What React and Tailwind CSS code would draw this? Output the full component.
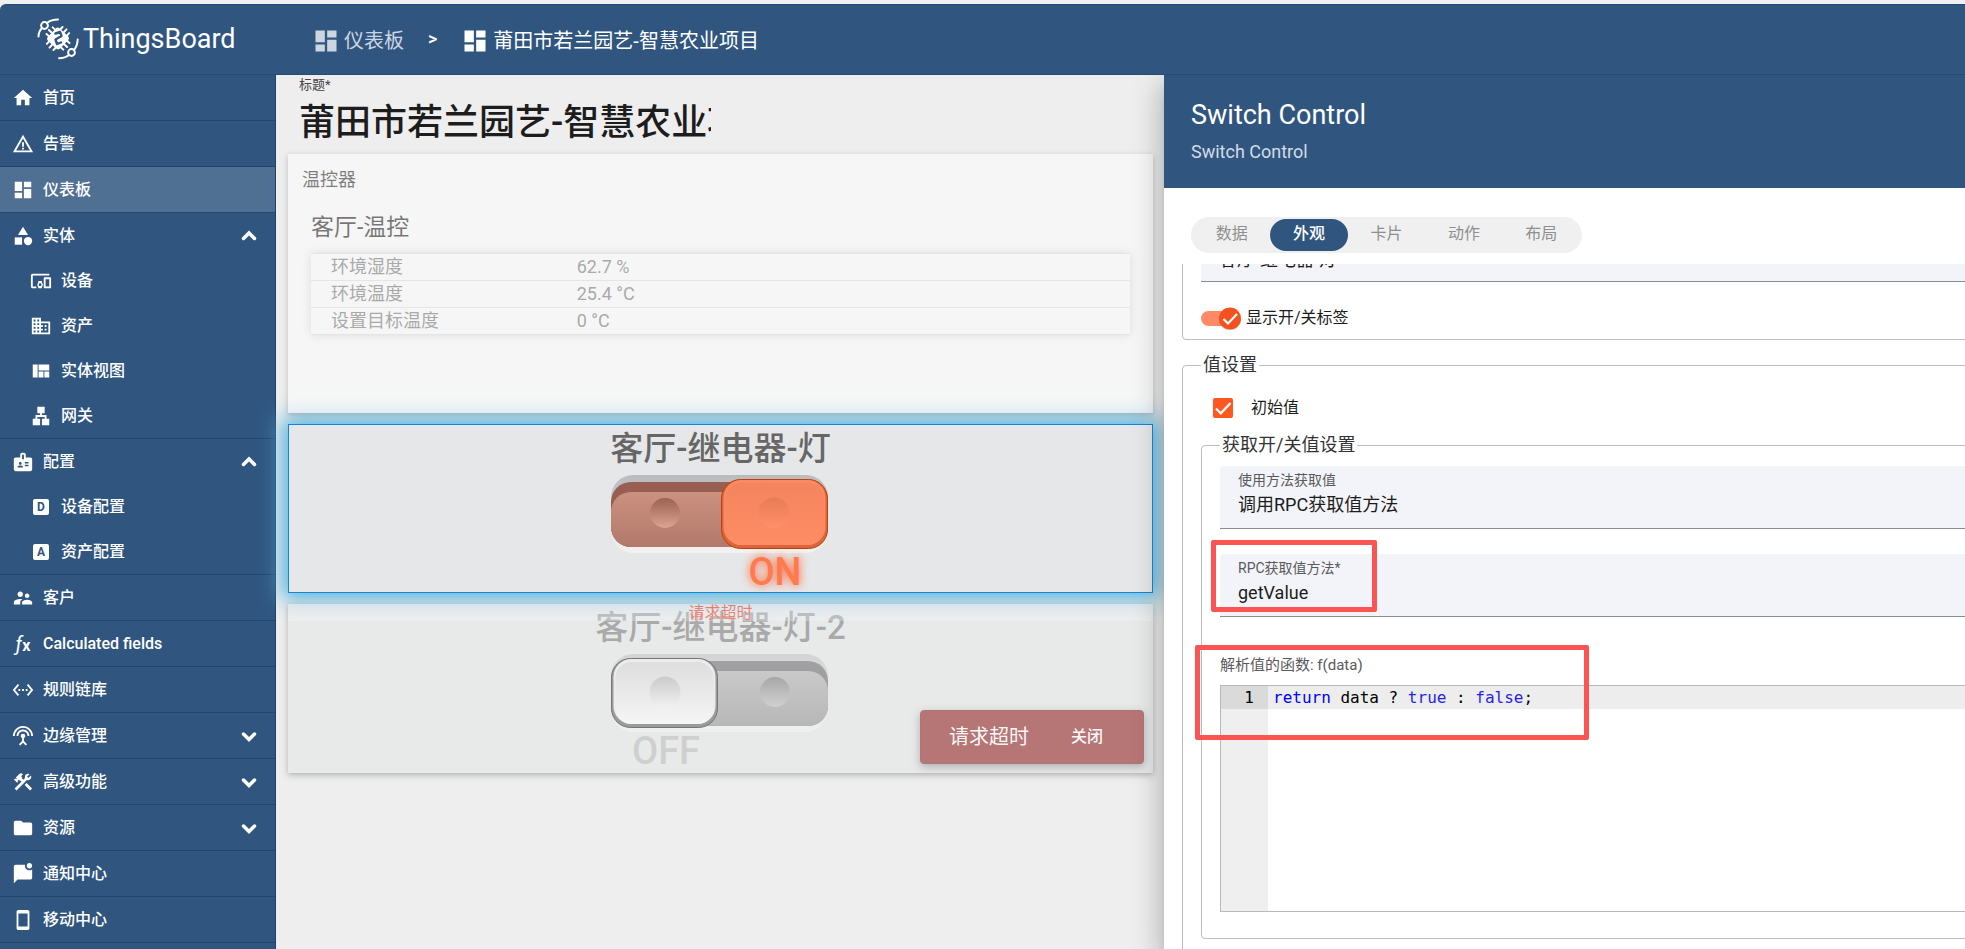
import { useState } from 'react';
import {
  MdBadge,
  MdCategory,
  MdConstruction,
  MdDashboard,
  MdDevicesOther,
  MdDomain,
  MdFolder,
  MdHome,
  MdLan,
  MdMarkChatUnread,
  MdSettingsEthernet,
  MdSettingsInputAntenna,
  MdSmartphone,
  MdSupervisorAccount,
  MdViewQuilt,
  MdWarningAmber,
} from 'react-icons/md';

// Letter in a filled square, used by the profile entries
const LetterIcon = ({ letter }) => (
  <span className="flex h-4 w-4 items-center justify-center rounded-xs bg-white text-xs font-bold leading-none text-[#305680]">
    {letter}
  </span>
);

const FxIcon = () => (
  <span className="flex items-end text-xl italic leading-5">
    ƒ<span className="text-base font-bold not-italic leading-4">x</span>
  </span>
);

const MENU = [
  { label: '首页', icon: <MdHome /> },
  { label: '告警', icon: <MdWarningAmber /> },
  { label: '仪表板', icon: <MdDashboard />, active: true },
  {
    label: '实体',
    icon: <MdCategory />,
    open: true,
    children: [
      { label: '设备', icon: <MdDevicesOther /> },
      { label: '资产', icon: <MdDomain /> },
      { label: '实体视图', icon: <MdViewQuilt /> },
      { label: '网关', icon: <MdLan /> },
    ],
  },
  {
    label: '配置',
    icon: <MdBadge />,
    open: true,
    children: [
      { label: '设备配置', icon: <LetterIcon letter="D" /> },
      { label: '资产配置', icon: <LetterIcon letter="A" /> },
    ],
  },
  { label: '客户', icon: <MdSupervisorAccount /> },
  { label: 'Calculated fields', icon: <FxIcon /> },
  { label: '规则链库', icon: <MdSettingsEthernet /> },
  { label: '边缘管理', icon: <MdSettingsInputAntenna />, children: [] },
  { label: '高级功能', icon: <MdConstruction />, children: [] },
  { label: '资源', icon: <MdFolder />, children: [] },
  { label: '通知中心', icon: <MdMarkChatUnread /> },
  { label: '移动中心', icon: <MdSmartphone /> },
];

const TELEMETRY = [
  ['环境湿度', '62.7 %'],
  ['环境温度', '25.4 °C'],
  ['设置目标温度', '0 °C'],
];

const TABS = ['数据', '外观', '卡片', '动作', '布局'];

const Logo = () => (
  <svg className="h-[42px] w-[42px]" viewBox="0 0 42 42" fill="none" stroke="#fff" strokeLinecap="round">
    <g transform="rotate(43 21 20.500)">
      <path strokeWidth="2" d="M16.500 9v23M21 8v25M25.500 9v23M9.500 16h23M8.500 20.500h25M9.500 25h23" />
      <rect x="12.500" y="12" width="17" height="17" rx="3" fill="#fff" stroke="none" />
    </g>
    <path
      stroke="#305680"
      strokeWidth="2.4"
      strokeLinejoin="round"
      d="M18.500 15.500l4.500-1.500 1.500 4-6 3.500 1.500 4.500 4-1.500"
    />
    <circle cx="7.500" cy="7.500" r="3.400" strokeWidth="2" />
    <circle cx="34.500" cy="34.500" r="3.400" strokeWidth="2" />
    <path strokeWidth="2" d="M10 5C13 2.500 17 1.500 21 1.500M5 10C2.500 12.500 1.500 15 1.500 18.500" />
    <path strokeWidth="2" d="M32 37c-3 2.500-6 3.200-10 3.200M37 32c2.500-3 3.500-6 3.700-10.500" />
  </svg>
);

const Chevron = ({ up }) => (
  <svg className="h-4 w-4" viewBox="0 0 16 16" fill="none" stroke="#fff" strokeWidth="3.500" strokeLinecap="round">
    <path d={up ? 'M2.500 10.500L8 5l5.500 5.500' : 'M2.500 6L8 11.500 13.500 6'} />
  </svg>
);

const MenuItem = ({ item }) => (
  <li className="border-b border-[#254669]">
    <a
      href="#"
      className={`flex h-[45px] items-center pl-3 pr-[18px] ${item.active ? 'bg-[#4f7093]' : ''}`}
    >
      <span className="flex w-[22px] justify-center text-[22px]">{item.icon}</span>
      <span className="ml-[9px] flex-1 text-base font-medium">{item.label}</span>
      {item.children && <Chevron up={item.open} />}
    </a>
    {item.open && (
      <ul>
        {item.children.map((child) => (
          <li key={child.label}>
            <a href="#" className="flex h-[45px] items-center pl-[30px]">
              <span className="flex w-[22px] justify-center text-[22px]">{child.icon}</span>
              <span className="ml-[9px] text-base font-medium">{child.label}</span>
            </a>
          </li>
        ))}
      </ul>
    )}
  </li>
);

const ON_COLORS = {
  rimTop: '#b9babd', rimBottom: '#f3f3f3', well: '#985e51',
  bedTop: '#cb9080', bedBottom: '#b2796a', dentTop: '#9a6252', dentBottom: '#dca292',
  edge: '#b9420e', side: '#dc653a', faceTop: '#f4845d', faceBottom: '#fe8d66',
  knobTop: '#e97b55', knobBottom: '#ff9069',
};

const OFF_COLORS = {
  rimTop: '#b9babd', rimBottom: '#f3f3f3', well: '#545454',
  bedTop: '#a6a6a6', bedBottom: '#828282', dentTop: '#626262', dentBottom: '#b4b4b4',
  edge: '#000000', side: '#4a4a4a', faceTop: '#cfcfcf', faceBottom: '#fdfdfd',
  knobTop: '#a8a8a8', knobBottom: '#f6f6f6',
};

const Gradient = ({ id, from, to }) => (
  <linearGradient id={id} x1="0" y1="0" x2="0" y2="1">
    <stop offset="0" stopColor={from} />
    <stop offset="1" stopColor={to} />
  </linearGradient>
);

const RockerSwitch = ({ id, title, defaultOn }) => {
  const [on, setOn] = useState(defaultOn);
  const c = on ? ON_COLORS : OFF_COLORS;
  const thumbX = on ? 113.5 : 3.5;

  return (
    <div className="flex flex-col items-center">
      <label htmlFor={id} className="h-[47px] text-[33px] font-medium leading-[47px] text-[#666]">
        {title}
      </label>
      <input
        id={id}
        type="checkbox"
        className="sr-only"
        checked={on}
        onChange={(e) => setOn(e.target.checked)}
      />
      <svg className="h-[84px] w-[226px]" viewBox="0 0 226 84">
        <defs>
          <Gradient id={`${id}-rim`} from={c.rimTop} to={c.rimBottom} />
          <Gradient id={`${id}-bed`} from={c.bedTop} to={c.bedBottom} />
          <Gradient id={`${id}-dent`} from={c.dentTop} to={c.dentBottom} />
          <Gradient id={`${id}-face`} from={c.faceTop} to={c.faceBottom} />
          <Gradient id={`${id}-knob`} from={c.knobTop} to={c.knobBottom} />
          <clipPath id={`${id}-clip`}>
            <rect x="3" y="10" width="217" height="65" rx="20" />
          </clipPath>
        </defs>
        <rect x="3" y="3" width="217" height="78" rx="22" fill={`url(#${id}-rim)`} />
        <rect x="3" y="10" width="217" height="65" rx="20" fill={c.well} />
        <rect x="3" y="20" width="217" height="55" rx="20" fill={`url(#${id}-bed)`} clipPath={`url(#${id}-clip)`} />
        <circle cx={on ? 57 : 167} cy="41" r="15" fill={`url(#${id}-dent)`} />
        <rect x={thumbX} y="7.500" width="106" height="69" rx="19" fill={c.side} stroke={c.edge} />
        <rect x={thumbX + 2} y="8" width="102" height="65" rx="18" fill={c.faceBottom} opacity="0.9" />
        <rect x={thumbX + 4} y="11" width="98" height="62" rx="16" fill={`url(#${id}-face)`} />
        <circle cx={on ? 166 : 57} cy="41" r="15.500" fill={`url(#${id}-knob)`} />
      </svg>
      <div className="grid w-[218px] grid-cols-2 text-center text-[38px] font-medium leading-8">
        <span className="text-[#b2b2b2]">{on ? '' : 'OFF'}</span>
        <span className="text-[#ff7a4d] [text-shadow:0_0_10px_#ff5722]">{on ? 'ON' : ''}</span>
      </div>
    </div>
  );
};

const FieldBox = ({ children }) => (
  <div className="flex h-[63px] flex-col rounded-t border-b border-[#8b8c90] bg-[#f3f4f9] pl-[18px]">
    {children}
  </div>
);

const Field = ({ id, label, children }) => (
  <FieldBox>
    <label htmlFor={id} className="mb-1 pt-1 text-sm leading-5 text-[#5a5a5c]">
      {label}
    </label>
    {children}
  </FieldBox>
);

const Sidebar = () => (
  <nav className="w-[276px] shrink-0 overflow-hidden border-r border-[#1f4068] bg-[#305680] text-white">
    <ul>
      {MENU.map((item) => (
        <MenuItem key={item.label} item={item} />
      ))}
    </ul>
  </nav>
);

const Dashboard = () => (
  <main className="min-w-0 flex-1 bg-[#eeeeee] pl-3 pr-[11px]">
    <div className="mb-[11px] flex flex-col pl-[11px]">
      <label htmlFor="dashboard-title" className="text-[13px] leading-5 text-[#444]">
        标题*
      </label>
      <input
        id="dashboard-title"
        className="h-12 w-[412px] bg-transparent text-4xl font-medium text-[#1d1d1d] outline-none"
        defaultValue="莆田市若兰园艺-智慧农业项目"
      />
    </div>

    <div className="flex flex-col gap-[11px]">
      {/* Thermostat card */}
      <section className="h-[259px] bg-white px-[23px] pt-3 opacity-50 shadow-[0_2px_6px_rgba(0,0,0,0.4)]">
        <h2 className="-ml-[9px] text-lg leading-7 text-[#111]">温控器</h2>
        <h3 className="mt-5 text-[23px] leading-7 text-black">客厅-温控</h3>
        <table className="mt-[11px] w-full border-y border-[#ddd] text-lg text-[#666] shadow-[0_0_10px_rgba(0,0,0,0.2)]">
          <tbody>
            {TELEMETRY.map(([name, value]) => (
              <tr key={name} className="h-[27px] border-b border-[#ddd] leading-6">
                <td className="w-[30%] p-0 pl-5">{name}</td>
                <td className="p-0 pl-5">{value}</td>
              </tr>
            ))}
          </tbody>
        </table>
      </section>

      {/* Selected widget */}
      <section className="h-[169px] border border-[#0f88dc] bg-[#e6e7e9] shadow-[0_0_20px_6px_#55b3de]">
        <RockerSwitch id="relay-1" title="客厅-继电器-灯" defaultOn />
      </section>

      <section className="relative h-[169px] bg-[#e4e5e6] opacity-50 shadow-[0_2px_6px_rgba(0,0,0,0.5)]">
        <RockerSwitch id="relay-2" title="客厅-继电器-灯-2" defaultOn={false} />
        <p className="absolute inset-x-0 top-0 bg-white/30 text-center text-base leading-[17px] text-[#ff1e00]">
          请求超时
        </p>
        <div
          role="alert"
          className="absolute bottom-[9px] right-[9px] flex h-[54px] items-center rounded border border-[#700000] bg-[#800000] pl-7 pr-10 text-white shadow-[0_3px_8px_rgba(0,0,0,0.5)]"
        >
          <span className="text-xl">请求超时</span>
          <button type="button" className="ml-[42px] text-base font-medium">
            关闭
          </button>
        </div>
      </section>
    </div>
  </main>
);

const CodeEditor = () => (
  <div className="flex h-[227px] border border-[#b9b9b9] font-['DejaVu_Sans_Mono',monospace] text-base leading-[23px]">
    <div className="w-[47px] bg-[#efefef] text-black">
      <div className="bg-[#dadada] pr-[14px] text-right">1</div>
    </div>
    <pre className="flex-1 font-[inherit]">
      <code className="block bg-[#ededed] pl-[5px] font-[inherit] text-black">
        <span className="text-[#0000ff]">return</span> data ? <span className="text-[#2a1fe8]">true</span> :{' '}
        <span className="text-[#2a1fe8]">false</span>;
      </code>
    </pre>
  </div>
);

const WidgetDrawer = () => {
  const [tab, setTab] = useState('外观');

  return (
    <aside className="relative flex w-[801px] shrink-0 flex-col bg-white shadow-[0_8px_10px_-5px_rgba(0,0,0,0.2),0_16px_24px_2px_rgba(0,0,0,0.14),0_6px_30px_5px_rgba(0,0,0,0.12)]">
      <header className="h-[113px] shrink-0 bg-[#305680] pl-[27px] pt-6 text-white">
        <h2 className="text-[27px] leading-8">Switch Control</h2>
        <p className="mt-[9px] text-lg leading-6 text-[#d3dbe4]">Switch Control</p>
      </header>

      <div role="tablist" className="ml-[27px] mt-[29px] flex h-9 w-[391px] shrink-0 rounded-full bg-[#f0f0f0] p-0.5">
        {TABS.map((name) => (
          <button
            key={name}
            type="button"
            role="tab"
            aria-selected={tab === name}
            onClick={() => setTab(name)}
            className={`flex-1 rounded-full pb-0.5 text-base ${
              tab === name ? 'bg-[#305680] font-medium text-white' : 'text-[#8f8f8f]'
            }`}
          >
            {name}
          </button>
        ))}
      </div>

      <div className="mt-[11px] min-h-0 flex-1 overflow-hidden pl-[18px]">
        <div className="-mr-20">
          <fieldset className="-mt-[46px] rounded border border-[#bdbdbd] px-[18px] pb-[9px]">
            <FieldBox>
              <input
                aria-label="开关标题"
                className="mt-[30px] h-[22px] bg-transparent text-lg leading-[22px] text-[#1c1c1c] outline-none"
                defaultValue="客厅-继电器-灯"
              />
            </FieldBox>
            <label className="mt-6 flex h-6 w-fit items-center text-base text-[#1c1c1c]">
              <input type="checkbox" className="sr-only" defaultChecked />
              <svg className="mr-1 h-6 w-[41px]" viewBox="0 0 41 24">
                <rect x="0" y="5" width="38" height="15" rx="7.500" fill="#ff8a66" />
                <circle cx="29" cy="13.500" r="11" fill="#000" opacity="0.15" />
                <circle cx="29" cy="12.500" r="11" fill="#f4511e" />
                <path d="M22.500 13l4.500 4.500 9-9.500" fill="none" stroke="#fff" strokeWidth="2.200" />
              </svg>
              显示开/关标签
            </label>
          </fieldset>

          <fieldset className="mt-[13px] rounded border border-[#bdbdbd] px-[18px] pb-10">
            <legend className="px-0.5 text-lg leading-6 text-[#333]">值设置</legend>
            <label className="ml-3 mt-[19px] flex h-6 w-fit items-center text-base text-[#1c1c1c]">
              <input type="checkbox" className="sr-only" defaultChecked />
              <svg className="mr-[18px] h-5 w-5" viewBox="0 0 20 20">
                <rect width="20" height="20" rx="2" fill="#ff5722" />
                <path d="M3 10.500l4.800 4.800L17.500 5" fill="none" stroke="#fff" strokeWidth="2.200" />
              </svg>
              初始值
            </label>

            <fieldset className="mt-[13px] rounded border border-[#bdbdbd] px-[18px] pb-[26px] pt-[9px]">
              <legend className="px-0.5 text-lg leading-6 text-[#333]">获取开/关值设置</legend>
              <Field id="retrieve-method" label="使用方法获取值">
                <select
                  id="retrieve-method"
                  className="h-[22px] appearance-none bg-transparent text-lg leading-[22px] text-[#1c1c1c] outline-none"
                >
                  <option>调用RPC获取值方法</option>
                </select>
              </Field>

              <div className="relative mt-[25px]">
                <Field id="rpc-method" label="RPC获取值方法*">
                  <input
                    id="rpc-method"
                    className="h-[22px] bg-transparent text-lg leading-[22px] text-[#1c1c1c] outline-none"
                    defaultValue="getValue"
                  />
                </Field>
                <div className="pointer-events-none absolute -left-[9px] -top-[14px] h-[72px] w-[166px] rounded-xs border-5 border-[#fc5353]" />
              </div>

              <div className="relative mt-9">
                <p className="text-[15px] leading-6 text-[#5a5a5c]">解析值的函数: f(data)</p>
                <div className="mt-2">
                  <CodeEditor />
                </div>
                <div className="pointer-events-none absolute -left-[25px] -top-2 h-[95px] w-[394px] rounded-xs border-5 border-[#fc5353]" />
              </div>
            </fieldset>
          </fieldset>
        </div>
      </div>
    </aside>
  );
};

const App = () => (
  <div className="flex h-screen flex-col overflow-hidden bg-[#f1f1f1] pt-1 font-['Roboto','Noto_Sans_CJK_SC',sans-serif]">
    <header className="flex h-[71px] shrink-0 items-center rounded-tl-md border-y border-[#254a75] bg-[#305680] text-white">
      <a href="#" className="flex w-[276px] items-center pb-0.5 pl-[37px]">
        <Logo />
        <span className="ml-1 text-[27px] leading-8">ThingsBoard</span>
      </a>
      <nav className="flex items-center pl-9 pt-0.5 text-xl">
        <a href="#" className="flex items-center text-[#cdd6e0]">
          <MdDashboard className="mr-1 h-7 w-7" />
          仪表板
        </a>
        <span className="mx-6 pb-1 text-lg font-medium">&gt;</span>
        <a href="#" className="flex items-center">
          <MdDashboard className="mr-1 h-7 w-7" />
          莆田市若兰园艺-智慧农业项目
        </a>
      </nav>
    </header>
    <div className="flex min-h-0 flex-1 overflow-hidden">
      <Sidebar />
      <Dashboard />
      <WidgetDrawer />
    </div>
  </div>
);

export default App;
